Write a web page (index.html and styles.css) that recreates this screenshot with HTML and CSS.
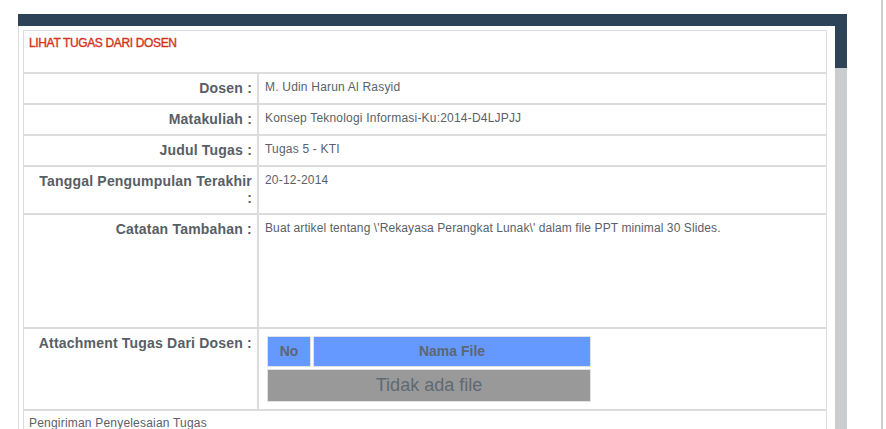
FILE: index.html
```html
<!DOCTYPE html>
<html>
<head>
<meta charset="utf-8">
<link rel="stylesheet" href="styles.css">
</head>
<body>
<div class="page">
  <div class="main">
    <div class="panel">
      <table class="detail">
        <colgroup><col class="col-label"><col class="col-value"></colgroup>
        <tr><td colspan="2" class="title">LIHAT TUGAS DARI DOSEN</td></tr>
        <tr><th>Dosen :</th><td>M. Udin Harun Al Rasyid</td></tr>
        <tr><th>Matakuliah :</th><td>Konsep Teknologi Informasi-Ku:2014-D4LJPJJ</td></tr>
        <tr><th>Judul Tugas :</th><td>Tugas 5 - KTI</td></tr>
        <tr><th>Tanggal Pengumpulan Terakhir :</th><td>20-12-2014</td></tr>
        <tr class="notes"><th>Catatan Tambahan :</th><td class="note-text">Buat artikel tentang \'Rekayasa Perangkat Lunak\' dalam file PPT minimal 30 Slides.</td></tr>
        <tr><th>Attachment Tugas Dari Dosen :</th><td>
          <table class="files">
            <colgroup><col class="col-no"><col class="col-name"></colgroup>
            <tr><th>No</th><th>Nama File</th></tr>
            <tr><td colspan="2" class="empty">Tidak ada file</td></tr>
          </table>
        </td></tr>
        <tr><td colspan="2" class="section">Pengiriman Penyelesaian Tugas</td></tr>
      </table>
    </div>
  </div>
  <div class="scroll"></div>
</div>
</body>
</html>
```
FILE: styles.css
```css
html, body {
  margin: 0;
  padding: 0;
  background: #ffffff;
}
body {
  font-family: "Liberation Sans", Arial, sans-serif;
  color: #5a6169;
  overflow: hidden;
}
.page {
  display: flex;
  height: 429px;
  overflow: hidden;
}
.main {
  margin-left: 18px;
  margin-top: 14px;
  width: 829px;
  flex: none;
  background: linear-gradient(#2d4357 0, #2d4357 54px, #c9cdd0 54px);
}
.panel {
  margin-top: 12px;
  width: 808px;
  min-height: 420px;
  background: #ffffff;
  border-left: 1px solid #dcdcdc;
  padding: 4px 4px 0 4px;
}
.detail {
  width: 804px;
  border-collapse: separate;
  border-spacing: 0;
  table-layout: fixed;
}
.col-label {
  width: 235px;
}
.col-value {
  width: 569px;
}
.detail > tbody > tr > td,
.detail > tbody > tr > th {
  border: 1px solid #dcdcdc;
  box-sizing: border-box;
  vertical-align: top;
}
.detail > tbody > tr > th {
  font-size: 14px;
  font-weight: bold;
  line-height: 17px;
  letter-spacing: 0.2px;
  text-align: right;
  padding: 6px 5px 6px 12px;
  color: #575e66;
}
.detail > tbody > tr > td {
  font-size: 12px;
  line-height: 15px;
  letter-spacing: 0.2px;
  padding: 6px;
  color: #5a6169;
}
.detail > tbody > tr > td.note-text {
  letter-spacing: 0.1px;
}
.detail > tbody > tr > td.title {
  height: 43px;
  padding: 5px 5px 0 5px;
  color: #d2321a;
  font-size: 12px;
  font-weight: normal;
  letter-spacing: -0.35px;
  -webkit-text-stroke: 0.35px #d2321a;
  line-height: 15px;
}
.detail > tbody > tr.notes > th,
.detail > tbody > tr.notes > td {
  height: 114px;
}
.detail > tbody > tr > td.section {
  padding: 5px 5px;
}
.files {
  border-collapse: separate;
  border-spacing: 2px;
  width: 328px;
  table-layout: fixed;
  margin-top: -1px;
  margin-bottom: -1px;
}
.col-no {
  width: 44px;
}
.files th,
.files td {
  border: 1px solid #e2e2e2;
  box-sizing: border-box;
  text-align: center;
  color: #5e6670;
  letter-spacing: 0;
}
.files th {
  background: #6699ff;
  font-size: 14px;
  font-weight: bold;
  height: 31px;
  padding: 0;
}
.files td.empty {
  background: #999999;
  font-size: 18px;
  height: 33px;
  padding: 0;
  color: #5d6a74;
}
.scroll {
  margin-left: 34px;
  width: 2px;
  height: 429px;
  background: #cfcfcf;
  flex: none;
}
```
